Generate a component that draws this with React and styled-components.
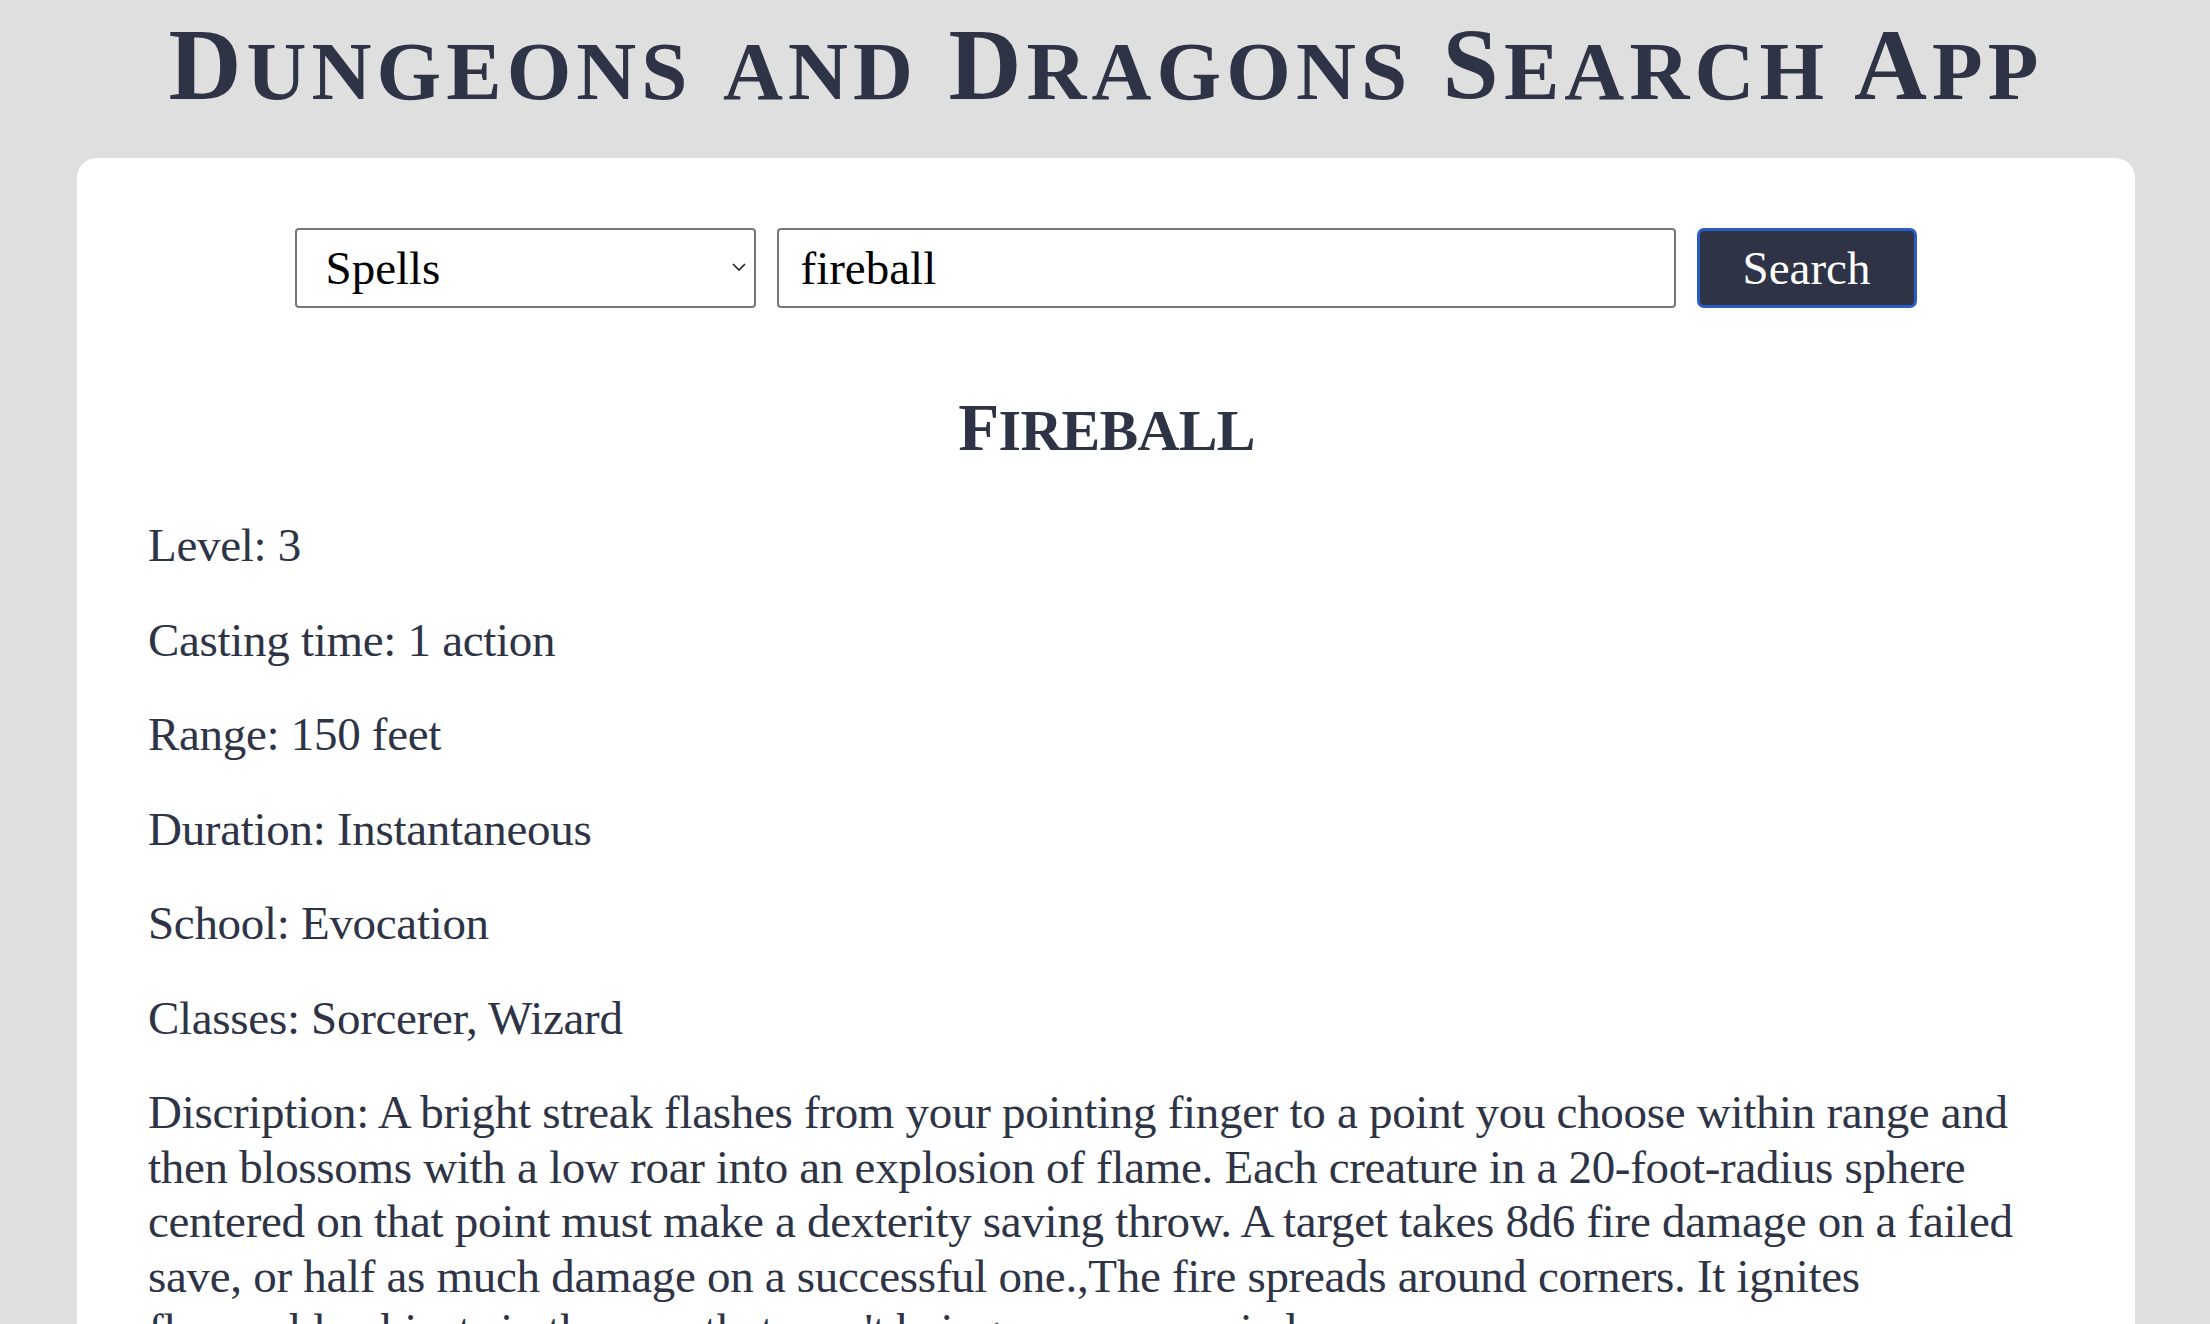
import React, { useState } from "react";
import styled, { createGlobalStyle } from "styled-components";

const GlobalStyle = createGlobalStyle`
    body {
        margin: 0;
        background-color: #dfdfdf;
        font-family: "Liberation Serif", "Times New Roman", serif;
        color: #2e3446;
    }
`;

const spell = {
    name: "Fireball",
    level: 3,
    castingTime: "1 action",
    range: "150 feet",
    duration: "Instantaneous",
    school: "Evocation",
    classes: ["Sorcerer", "Wizard"],
    desc: [
        "A bright streak flashes from your pointing finger to a point you choose within range and then blossoms with a low roar into an explosion of flame. Each creature in a 20-foot-radius sphere centered on that point must make a dexterity saving throw. A target takes 8d6 fire damage on a failed save, or half as much damage on a successful one.",
        "The fire spreads around corners. It ignites flammable objects in the area that aren't being worn or carried.",
    ],
};

// Cinzel-like small caps: capitals drawn tall, lowercase drawn as small capitals
const SmallCaps = ({ text, big, small }) => (
    <>
        {text.split(" ").map((word, i) => {
            const isCap = word[0] === word[0].toUpperCase();
            return (
                <React.Fragment key={i}>
                    {i > 0 && " "}
                    {isCap ? (
                        <>
                            <Cap size={big}>{word[0]}</Cap>
                            <Cap size={small}>{word.slice(1).toUpperCase()}</Cap>
                        </>
                    ) : (
                        <Cap size={small}>{word.toUpperCase()}</Cap>
                    )}
                </React.Fragment>
            );
        })}
    </>
);

const App = () => {
    const [category, setCategory] = useState("spells");
    const [query, setQuery] = useState("fireball");

    return (
        <Page>
            <GlobalStyle />
            <Title>
                <SmallCaps text="Dungeons and Dragons Search App" big={101} small={83} />
            </Title>
            <Card>
                <SearchForm onSubmit={(e) => e.preventDefault()}>
                    <SelectWrap>
                        <Select value={category} onChange={(e) => setCategory(e.target.value)}>
                            <option value="spells">Spells</option>
                            <option value="monsters">Monsters</option>
                            <option value="equipment">Equipment</option>
                            <option value="classes">Classes</option>
                        </Select>
                        <Chevron viewBox="0 0 14 8" aria-hidden="true">
                            <path d="M1 1l6 6 6-6" />
                        </Chevron>
                    </SelectWrap>
                    <Input value={query} onChange={(e) => setQuery(e.target.value)} />
                    <SearchButton type="submit">Search</SearchButton>
                </SearchForm>

                <Result>
                    <SpellName>
                        <SmallCaps text={spell.name} big={67} small={58} />
                    </SpellName>
                    <Stat>Level: {spell.level}</Stat>
                    <Stat>Casting time: {spell.castingTime}</Stat>
                    <Stat>Range: {spell.range}</Stat>
                    <Stat>Duration: {spell.duration}</Stat>
                    <Stat>School: {spell.school}</Stat>
                    <Stat>Classes: {spell.classes.join(", ")}</Stat>
                    <Stat>Discription: {spell.desc.join(",")}</Stat>
                </Result>
            </Card>
        </Page>
    );
};

const Page = styled.div`
    padding: 0 75px 0 77px;
`;

const Title = styled.h1`
    margin: 15px 0 42px;
    text-align: center;
    font-size: 101px;
    line-height: 1;
    font-weight: 700;
    letter-spacing: 5.1px;
    color: #2e3446;
    white-space: nowrap;
`;

const Cap = styled.span`
    font-size: ${(p) => p.size}px;
`;

const Card = styled.div`
    background-color: #ffffff;
    border-radius: 20px;
    padding: 70px 70px 40px 71px;
`;

const SearchForm = styled.form`
    display: flex;
    justify-content: center;
    gap: 21px;
    padding-right: 2px;
`;

const fieldBase = `
    box-sizing: border-box;
    height: 80px;
    border: 2px solid #767676;
    border-radius: 4px;
    background-color: #ffffff;
    color: #000000;
    font-family: "Liberation Serif", "Times New Roman", serif;
    font-size: 47px;
`;

const SelectWrap = styled.div`
    position: relative;
    width: 461px;
    height: 80px;
`;

const Select = styled.select`
    ${fieldBase}
    width: 100%;
    padding: 0 40px 0 29px;
    appearance: none;
    outline: none;
`;

const Chevron = styled.svg`
    position: absolute;
    right: 10px;
    top: 35px;
    width: 14px;
    height: 8px;
    fill: none;
    stroke: #222222;
    stroke-width: 1.6;
    pointer-events: none;
`;

const Input = styled.input`
    ${fieldBase}
    width: 899px;
    padding: 0 22px;
    outline: none;
`;

const SearchButton = styled.button`
    box-sizing: border-box;
    width: 220px;
    height: 80px;
    background-color: #2e3446;
    color: #ffffff;
    border: 3px solid #2a5dc4;
    border-radius: 7px;
    font-family: "Liberation Serif", "Times New Roman", serif;
    font-size: 47px;
    cursor: pointer;
`;

const Result = styled.div`
    padding-top: 86px;
`;

const SpellName = styled.h2`
    margin: 0 0 57px;
    text-align: center;
    font-size: 67px;
    line-height: 1;
    font-weight: 700;
    letter-spacing: -0.7px;
    color: #2e3446;
`;

const Stat = styled.p`
    margin: 0 0 40px;
    font-size: 47px;
    line-height: 54.5px;
    letter-spacing: -0.3px;
    color: #2e3446;
`;

export default App;
